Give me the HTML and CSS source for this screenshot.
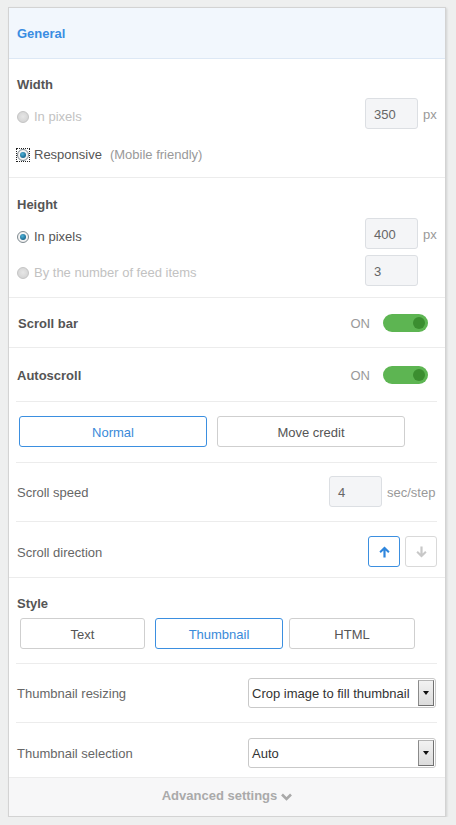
FILE: index.html
```html
<!DOCTYPE html>
<html>
<head>
<meta charset="utf-8">
<link rel="stylesheet" href="styles.css">
</head>
<body>
<div class="card">
  <div class="head">General</div>

  <div class="section sec-width">
    <div class="label">Width</div>
    <div class="row r-a">
      <span class="choice"><span class="radio"></span><span class="opt off">In pixels</span></span>
      <span class="grow"></span>
      <span class="input">350</span><span class="unit">px</span>
    </div>
    <div class="row r-b">
      <span class="choice"><span class="focus"><span class="radio on"></span></span><span class="opt">Responsive</span><span class="hint">(Mobile friendly)</span></span>
    </div>
  </div>

  <div class="section sec-height">
    <div class="label">Height</div>
    <div class="row r-a">
      <span class="choice"><span class="radio on"></span><span class="opt">In pixels</span></span>
      <span class="grow"></span>
      <span class="input">400</span><span class="unit">px</span>
    </div>
    <div class="row r-c">
      <span class="choice"><span class="radio"></span><span class="opt off">By the number of feed items</span></span>
      <span class="grow"></span>
      <span class="input">3</span><span class="unit"></span>
    </div>
  </div>

  <div class="section toggle-row tr-scroll">
    <span class="label">Scroll bar</span>
    <span class="grow"></span>
    <span class="state">ON</span>
    <span class="switch"><span class="knob"></span></span>
  </div>

  <div class="section group">
    <div class="sub toggle-row tr-auto">
      <span class="label">Autoscroll</span>
      <span class="grow"></span>
      <span class="state">ON</span>
      <span class="switch"><span class="knob"></span></span>
    </div>
    <div class="sub btn-row">
      <span class="btn active wide">Normal</span>
      <span class="btn wide">Move credit</span>
    </div>
    <div class="sub line-row speed">
      <span class="plain">Scroll speed</span>
      <span class="grow"></span>
      <span class="input">4</span><span class="unit long">sec/step</span>
    </div>
    <div class="sub line-row dir last">
      <span class="plain">Scroll direction</span>
      <span class="grow"></span>
      <span class="ibtn active">
        <svg width="11" height="12" viewBox="0 0 11 12"><path d="M5.5 0.5 L10.6 5.6 L9.2 7 L6.6 4.5 L6.6 11.5 L4.4 11.5 L4.4 4.5 L1.8 7 L0.4 5.6 Z" fill="#2f86dd"/></svg>
      </span>
      <span class="ibtn">
        <svg width="11" height="12" viewBox="0 0 11 12"><path d="M5.5 11.5 L10.6 6.4 L9.2 5 L6.6 7.5 L6.6 0.5 L4.4 0.5 L4.4 7.5 L1.8 5 L0.4 6.4 Z" fill="#c8c8c8"/></svg>
      </span>
    </div>
  </div>

  <div class="section style-sec">
    <div class="sub style-block">
      <div class="label">Style</div>
      <div class="styles">
        <span class="btn s-text">Text</span>
        <span class="btn active s-thumb">Thumbnail</span>
        <span class="btn s-html">HTML</span>
      </div>
    </div>
    <div class="sub line-row sel1">
      <span class="plain">Thumbnail resizing</span>
      <span class="grow"></span>
      <span class="select"><span class="sel-text">Crop image to fill thumbnail</span><span class="sel-arrow"></span></span>
    </div>
    <div class="sub line-row sel2 last">
      <span class="plain">Thumbnail selection</span>
      <span class="grow"></span>
      <span class="select"><span class="sel-text">Auto</span><span class="sel-arrow"></span></span>
    </div>
  </div>

  <div class="foot">
    <span>Advanced settings</span>
    <svg class="chev" width="11" height="8" viewBox="0 0 11 8"><path d="M1 1.5 L5.5 6 L10 1.5" fill="none" stroke="#a9a9a9" stroke-width="2.6"/></svg>
  </div>
</div>
</body>
</html>
```

FILE: styles.css
```css
html, body {
  margin: 0;
}
body {
  padding: 7px 0 0 8px;
  background: #eeefef;
  font-family: "Liberation Sans", Arial, sans-serif;
  font-size: 13px;
  line-height: 16px;
  color: #555;
}
.card {
  width: 436px;
  border: 1px solid #d3d3d3;
  background: #fff;
  box-shadow: 1px 1px 2px rgba(0, 0, 0, 0.12);
}
.head {
  height: 51px;
  box-sizing: border-box;
  padding-top: 2px;
  background: #f2f7fd;
  border-bottom: 1px solid #dde8f5;
  display: flex;
  align-items: center;
  padding-left: 8px;
  color: #3a8de2;
  font-weight: bold;
}
.section {
  border-bottom: 1px solid #ececec;
  padding: 0 8px;
}
.label {
  font-weight: bold;
  color: #555;
}
.grow {
  flex: 1;
}
.row {
  display: flex;
  align-items: center;
  height: 31px;
}
.choice {
  display: flex;
  align-items: center;
  padding-top: 6px;
}
.r-b .choice {
  padding-top: 2px;
}
.r-c .choice {
  padding-top: 5px;
}
.sec-width {
  padding-top: 18px;
  padding-bottom: 8px;
}
.sec-width .r-a {
  margin-top: 5px;
}
.sec-width .r-b {
  margin-top: 9px;
}
.sec-height {
  padding-top: 19px;
  padding-bottom: 11px;
}
.sec-height .r-a {
  margin-top: 5px;
}
.sec-height .r-c {
  margin-top: 6px;
}
.radio {
  width: 12px;
  height: 12px;
  box-sizing: border-box;
  border-radius: 50%;
  border: 1px solid #c4c4c4;
  background: radial-gradient(circle at 50% 45%, #e6e6e6 0%, #cfcfcf 100%);
  display: inline-flex;
  align-items: center;
  justify-content: center;
  margin-right: 5px;
  flex: none;
}
.radio.on {
  border-color: #7f8a90;
  background: radial-gradient(circle at 50% 45%, #ffffff 0%, #e9e9e9 100%);
}
.radio.on::after {
  content: "";
  width: 6px;
  height: 6px;
  border-radius: 50%;
  background: radial-gradient(circle at 40% 35%, #4fb2d8 0%, #1a6a92 70%, #134e6d 100%);
}
.focus {
  display: inline-flex;
  outline: 1px dotted #222;
  outline-offset: 0;
  margin-right: 5px;
}
.focus .radio {
  margin-right: 0;
}
.opt {
  color: #555;
}
.opt.off {
  color: #c2c2c2;
}
.hint {
  color: #999;
  margin-left: 8px;
}
.input {
  width: 53px;
  height: 31px;
  box-sizing: border-box;
  border: 1px solid #dcdfe3;
  border-radius: 3px;
  background: #f4f5f7;
  color: #666;
  padding: 2px 0 0 8px;
  display: flex;
  align-items: center;
}
.unit {
  width: 14px;
  margin-left: 5px;
  padding-top: 2px;
  color: #999;
}
.unit.long {
  width: 50px;
}
.toggle-row {
  display: flex;
  align-items: center;
}
.tr-scroll {
  height: 50px;
  box-sizing: border-box;
  padding-left: 9px;
}
.toggle-row .label, .toggle-row .state {
  padding-top: 2px;
}
.state {
  color: #999;
  margin-right: 13px;
}
.switch {
  position: relative;
  width: 45px;
  height: 18px;
  border-radius: 9px;
  background: #5db552;
  margin-right: 9px;
  margin-top: 1px;
}
.knob {
  position: absolute;
  right: 3px;
  top: 3px;
  width: 12px;
  height: 12px;
  border-radius: 50%;
  background: #3b8e30;
}
.group, .style-sec {
  padding: 0;
}
.sub {
  margin: 0 8px 0 7px;
  padding-left: 1px;
  border-bottom: 1px solid #ececec;
}
.sub.last {
  border-bottom: none;
}
.tr-auto {
  height: 54px;
  box-sizing: border-box;
}
.btn-row {
  display: flex;
  padding: 14px 0 15px 3px;
}
.btn {
  height: 31px;
  box-sizing: border-box;
  border: 1px solid #cfcfcf;
  border-radius: 3px;
  display: flex;
  align-items: center;
  justify-content: center;
  padding-top: 3px;
  color: #555;
  background: #fff;
}
.btn.active {
  border-color: #3b8fe0;
  color: #3a8ad9;
}
.btn.wide {
  width: 188px;
}
.btn.wide + .btn.wide {
  margin-left: 10px;
}
.line-row {
  display: flex;
  align-items: center;
}
.plain {
  color: #666;
  padding-top: 2px;
}
.speed {
  padding: 13px 0 14px 1px;
}
.dir {
  padding: 14px 0 10px 1px;
}
.ibtn {
  width: 32px;
  height: 31px;
  box-sizing: border-box;
  border: 1px solid #d9d9d9;
  border-radius: 3px;
  display: flex;
  align-items: center;
  justify-content: center;
}
.ibtn.active {
  border-color: #3b8fe0;
}
.ibtn + .ibtn {
  margin-left: 5px;
}
.style-block {
  padding: 18px 0 14px 1px;
}
.styles {
  display: flex;
  margin-top: 6px;
  padding-left: 3px;
}
.s-text {
  width: 125px;
}
.s-thumb {
  width: 128px;
  margin-left: 10px;
}
.s-html {
  width: 126px;
  margin-left: 6px;
}
.sel1 {
  padding: 14px 0 14px 1px;
}
.sel2 {
  padding: 15px 0 9px 1px;
}
.select {
  width: 188px;
  height: 30px;
  box-sizing: border-box;
  border: 1px solid #c9c9c9;
  border-radius: 3px;
  display: flex;
  align-items: center;
  margin-right: 1px;
  padding: 1px 1px 1px 3px;
  color: #333;
}
.sel-text {
  flex: 1;
  padding-top: 2px;
}
.sel-arrow {
  width: 16px;
  height: 26px;
  box-sizing: border-box;
  border: 1px solid #707070;
  border-top-color: #b5b5b5;
  border-left-color: #8a8a8a;
  background: linear-gradient(#f2f2f2, #dcdcdc);
  display: flex;
  align-items: center;
  justify-content: center;
}
.sel-arrow::after {
  content: "";
  border-left: 3.5px solid transparent;
  border-right: 3.5px solid transparent;
  border-top: 4px solid #111;
}
.foot {
  height: 38px;
  box-sizing: border-box;
  padding-bottom: 2px;
  background: #f7f7f8;
  display: flex;
  align-items: center;
  justify-content: center;
  color: #aaa;
  font-weight: bold;
}
.chev {
  margin-left: 4px;
  margin-top: 2px;
}
```
